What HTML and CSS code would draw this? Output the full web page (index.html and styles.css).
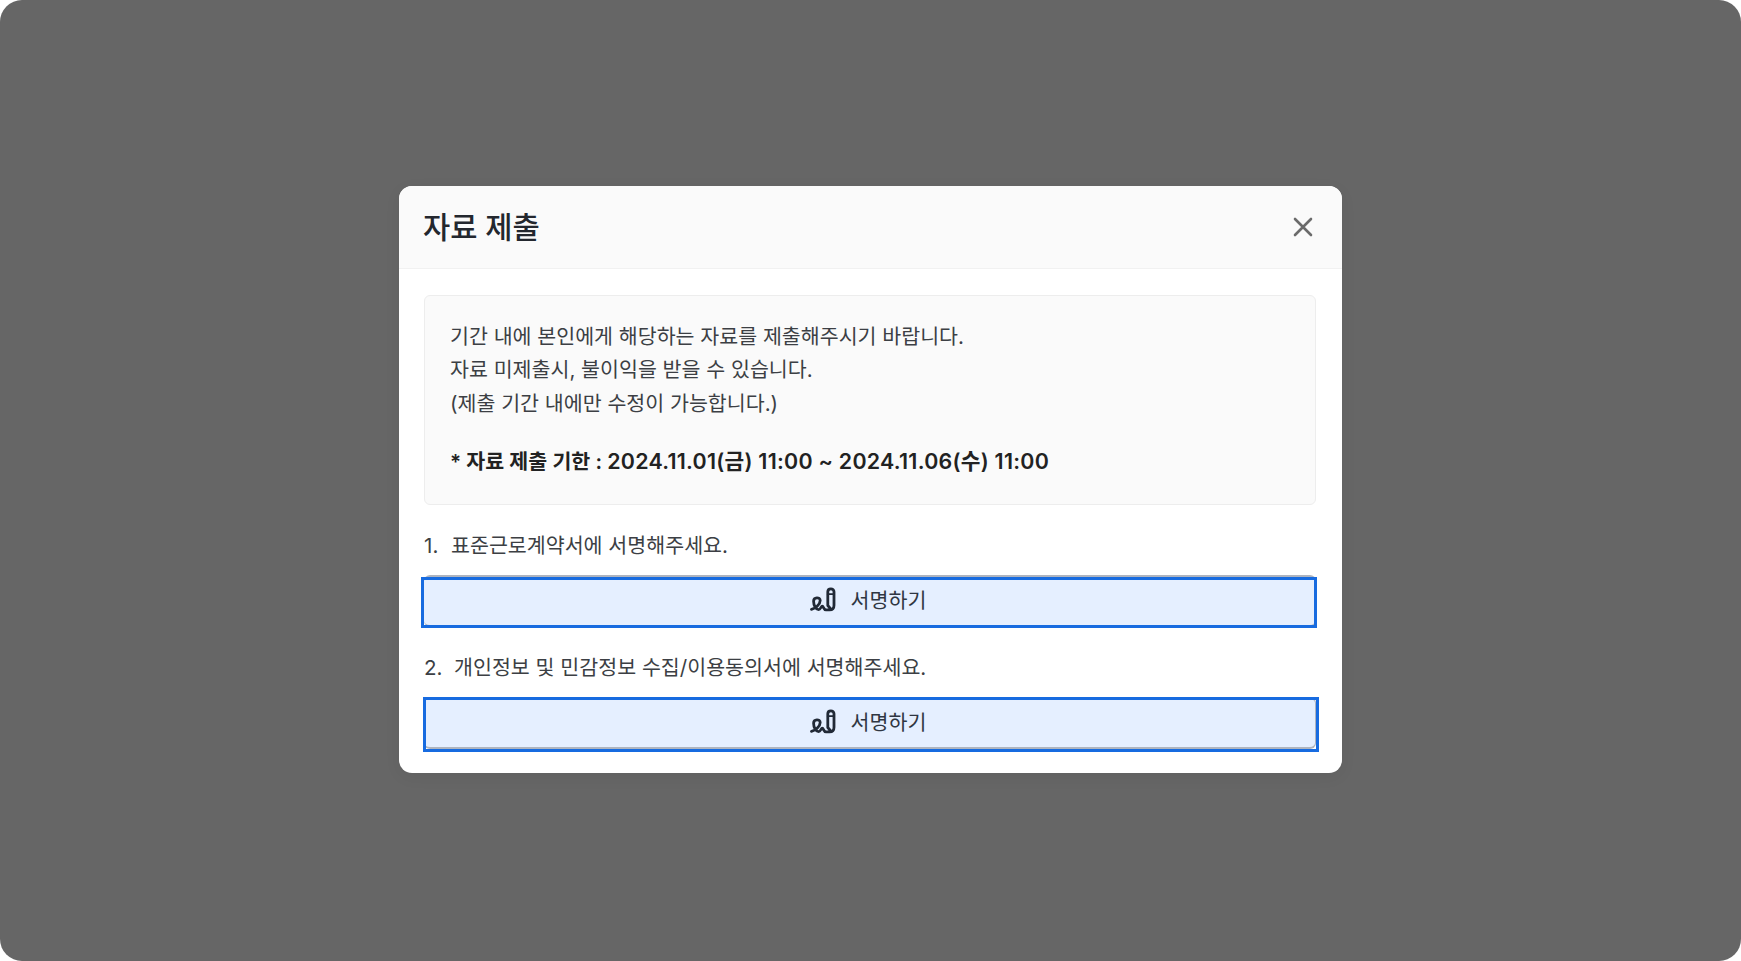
FILE: index.html
```html
<!DOCTYPE html>
<html lang="ko">
<head>
    <meta charset="UTF-8">
    <meta name="viewport" content="width=device-width, initial-scale=1.0">
    <title>자료 제출</title>
    <link rel="stylesheet" href="styles.css">
</head>
<body>
    <div class="backdrop">
        <div class="modal" role="dialog" aria-labelledby="modal-title">
            <div class="modal-header">
                <h2 class="modal-title" id="modal-title">자료 제출</h2>
                <button class="close-button" aria-label="닫기">
                    <svg width="20" height="20" viewBox="0 0 20 20" fill="none" stroke="#6b6b6b" stroke-width="2.6" stroke-linecap="round">
                        <path d="M2 2L18 18M18 2L2 18"/>
                    </svg>
                </button>
            </div>
            <div class="modal-body">
                <div class="notice">
                    <p>기간 내에 본인에게 해당하는 자료를 제출해주시기 바랍니다.</p>
                    <p>자료 미제출시, 불이익을 받을 수 있습니다.</p>
                    <p>(제출 기간 내에만 수정이 가능합니다.)</p>
                    <p class="deadline">* 자료 제출 기한 : <span class="deadline-date">2024.11.01(금) 11:00 ~ 2024.11.06(수) 11:00</span></p>
                </div>
                <div class="item">
                    <p class="item-title"><span class="num">1.</span><span>표준근로계약서에 서명해주세요.</span></p>
                    <div class="sign-wrap">
                        <button class="sign-button">
                            <svg width="26" height="25" viewBox="0 0 26 25" fill="none" stroke="#212936" stroke-width="2.8" stroke-linecap="round" stroke-linejoin="round">
                                <path d="M1.5 22.4C5.5 21.5 10.2 17.2 10.2 13.6C10.2 9.8 3.6 9.8 3.6 14.2C3.6 18.4 6 22.6 8.6 22.6C10.6 22.6 11 19.2 12.3 19.2C13.6 19.2 13.5 22.9 16 22.9H19.6C22.7 22.9 24 21 24 18.3V4.8C24 .8 17.8 .8 17.8 4.8V18.5L20.9 22.2"/>
                                <path d="M17.8 7.2H24" stroke-width="1.8"/>
                            </svg>
                            <span>서명하기</span>
                        </button>
                        <div class="highlight highlight-1"></div>
                    </div>
                </div>
                <div class="item">
                    <p class="item-title"><span class="num num-2">2.</span><span>개인정보 및 민감정보 수집/이용동의서에 서명해주세요.</span></p>
                    <div class="sign-wrap">
                        <button class="sign-button">
                            <svg width="26" height="25" viewBox="0 0 26 25" fill="none" stroke="#212936" stroke-width="2.8" stroke-linecap="round" stroke-linejoin="round">
                                <path d="M1.5 22.4C5.5 21.5 10.2 17.2 10.2 13.6C10.2 9.8 3.6 9.8 3.6 14.2C3.6 18.4 6 22.6 8.6 22.6C10.6 22.6 11 19.2 12.3 19.2C13.6 19.2 13.5 22.9 16 22.9H19.6C22.7 22.9 24 21 24 18.3V4.8C24 .8 17.8 .8 17.8 4.8V18.5L20.9 22.2"/>
                                <path d="M17.8 7.2H24" stroke-width="1.8"/>
                            </svg>
                            <span>서명하기</span>
                        </button>
                        <div class="highlight highlight-2"></div>
                    </div>
                </div>
            </div>
        </div>
    </div>
</body>
</html>
```
FILE: styles.css
```css
* {
    box-sizing: border-box;
}

body {
    margin: 0;
    background-color: #fff;
    font-family: Inter, "Noto Sans CJK KR", sans-serif;
    color: #3c3f44;
}

p, h2 {
    margin: 0;
    white-space: nowrap;
}

.backdrop {
    display: flex;
    justify-content: center;
    align-items: flex-start;
    height: 961px;
    padding-top: 186px;
    background-color: #666;
    border-radius: 22px;
}

.modal {
    width: 943px;
    height: 587px;
    background-color: #fff;
    border-radius: 13px;
    box-shadow: 0 4px 16px rgba(0, 0, 0, 0.06);
}

.modal-header {
    display: flex;
    justify-content: space-between;
    align-items: center;
    height: 83px;
    padding: 0 29px 0 24px;
    background-color: #fafafa;
    border-bottom: 1px solid #f1f1f1;
    border-radius: 13px 13px 0 0;
}

.modal-title {
    padding-bottom: 1px;
    font-size: 29.6px;
    font-weight: 450;
    line-height: 40px;
    color: #23272e;
}

.close-button {
    display: flex;
    padding: 0;
    background: none;
    border: none;
    cursor: pointer;
}

.modal-body {
    padding: 26px 26px 0 25px;
}

.notice {
    height: 210px;
    padding: 24px 25px;
    background-color: #fafafa;
    border: 1px solid #ededed;
    border-radius: 6px;
    font-size: 20.58px;
    line-height: 33.4px;
}

.deadline {
    margin-top: 25px;
    font-weight: 600;
    color: #222;
}

.deadline-date {
    font-size: 21.4px;
    letter-spacing: 0.27px;
}

.item {
    height: 122px;
    padding-top: 24px;
}

.item-title {
    display: flex;
    height: 33px;
    margin-bottom: 13px;
    font-size: 20.6px;
    line-height: 33px;
}

.num {
    width: 27px;
}

.num-2 {
    width: 30px;
}

.sign-wrap {
    position: relative;
}

.sign-button {
    display: flex;
    justify-content: center;
    align-items: center;
    gap: 15px;
    width: 100%;
    height: 52px;
    padding: 0 3px 4px 0;
    background-color: #e5efff;
    border: 2px solid #aeb4bf;
    border-width: 2px 1px 2px 0;
    border-radius: 6px;
    font-family: inherit;
    font-size: 20.6px;
    color: #2f3642;
    cursor: pointer;
}

/* blue guide box over each button */
.highlight {
    position: absolute;
    border: 3px solid #176be0;
    pointer-events: none;
}

.highlight-1 {
    top: 2px;
    left: -3px;
    width: 896px;
    height: 51px;
}

.highlight-2 {
    top: 0;
    left: -1px;
    width: 896px;
    height: 55px;
}
```
